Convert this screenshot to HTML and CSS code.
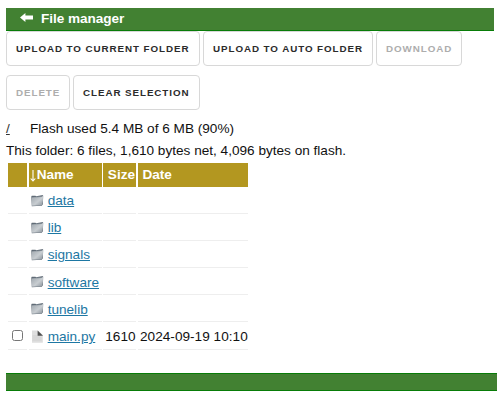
FILE: index.html
```
<!DOCTYPE html>
<html lang="en">
<head>
<meta charset="utf-8">
<title>File manager</title>
<link rel="stylesheet" href="styles.css">
</head>
<body>
<svg class="defs" width="0" height="0" aria-hidden="true">
  <defs>
    <linearGradient id="metal" x1="0" y1="0" x2="1" y2="1">
      <stop offset="0" stop-color="#9da5ac"/><stop offset=".55" stop-color="#c8cdd1"/><stop offset="1" stop-color="#858e97"/>
    </linearGradient>
    <symbol id="folder" viewBox="0 0 13 12">
      <path d="M.3 2 .8 1.2h3.6l.9.6L12 .5v9L10.8 11.3.8 11.7z" fill="#606b76"/>
      <path d="M1 3.4 10.6 2.5 12.6 1 11.5 9.8 10.5 11 1 11.3z" fill="url(#metal)"/>
      <path d="M1 3.2 10.4 2.4 12.3 1" fill="none" stroke="#dfe2e5" stroke-width=".4"/>
    </symbol>
    <symbol id="file" viewBox="0 0 13 13">
      <path d="M1 .5h6l4.8 4.6v7.6H1z" fill="#dedede"/>
      <path d="M1.5 6h7M1.5 8h9M1.5 10h9" stroke="#cacaca" stroke-width=".7"/>
      <path d="M6.6.4 12 5.8H6.6z" fill="#505050"/>
    </symbol>
  </defs>
</svg>
<header class="bar">
  <svg class="back" viewBox="0 0 13 9" preserveAspectRatio="none"><path d="M0 4.5 5.4 0v2.6H13v3.8H5.4V9z" fill="#fff"/></svg>
  <h1>File manager</h1>
</header>
<div class="actions">
  <button class="b-current">Upload to current folder</button>
  <button class="b-auto">Upload to auto folder</button>
  <button class="b-download" disabled>Download</button>
  <button class="b-delete" disabled>Delete</button>
  <button class="b-clear">Clear selection</button>
</div>
<p class="path"><a href="#">/</a><span>Flash used 5.4 MB of 6 MB (90%)</span></p>
<p class="summary">This folder: 6 files, 1,610 bytes net, 4,096 bytes on flash.</p>
<div class="files">
  <div class="row head">
    <div></div>
    <div class="sort"><svg viewBox="0 0 6 12"><path d="M3 0v11M.7 8.5 3 11l2.3-2.5" fill="none" stroke="#fff" stroke-width="1.1"/></svg>Name</div>
    <div>Size</div><div>Date</div>
  </div>
  <div class="row"><div></div><div class="name"><svg><use href="#folder"/></svg><a href="#">data</a></div><div></div><div></div></div>
  <div class="row"><div></div><div class="name"><svg><use href="#folder"/></svg><a href="#">lib</a></div><div></div><div></div></div>
  <div class="row"><div></div><div class="name"><svg><use href="#folder"/></svg><a href="#">signals</a></div><div></div><div></div></div>
  <div class="row"><div></div><div class="name"><svg><use href="#folder"/></svg><a href="#">software</a></div><div></div><div></div></div>
  <div class="row"><div></div><div class="name"><svg><use href="#folder"/></svg><a href="#">tunelib</a></div><div></div><div></div></div>
  <div class="row"><div class="check"><span class="box" role="checkbox" aria-checked="false"></span></div><div class="name"><svg><use href="#file"/></svg><a href="#">main.py</a></div><div class="size">1610</div><div class="date">2024-09-19 10:10</div></div>
</div>
<footer></footer>
</body>
</html>
```
FILE: styles.css
```
* { box-sizing: border-box; }
html { overflow: hidden; background: #fff; }
body {
  margin: 0;
  padding: 8px 0 0 6px;
  font: 13.6px/22px "Liberation Sans", Arial, sans-serif;
  color: #111;
  white-space: nowrap;
}
.defs { display: block; }
.bar {
  display: flex;
  align-items: center;
  gap: 8px;
  width: 488px;
  height: 23px;
  padding: 0 0 1px 14px;
  background: #428132;
  border-bottom: 1px solid #087c08;
}
.back { width: 13px; height: 9px; margin-top: -2px; }
h1 { margin: 0; font-size: 13.6px; line-height: 20px; color: #fff; letter-spacing: -.05px; }
.actions { display: flex; flex-wrap: wrap; gap: 9px 3px; width: 480px; }
button {
  height: 35px;
  padding: 0 0 0 9px;
  background: #fff;
  border: 1px solid #d8d8d8;
  border-radius: 4px;
  font: bold 9.8px/33px "Liberation Sans", Arial, sans-serif;
  letter-spacing: .93px;
  text-align: left;
  text-transform: uppercase;
  white-space: nowrap;
  color: #2b2b2b;
}
button:disabled { color: #adadad; }
.b-current { width: 194px; }
.b-auto { width: 170px; }
.b-download { width: 86px; }
.b-delete { width: 64px; }
.b-clear { width: 127px; }
p { margin: 0; }
.path { display: flex; margin-top: 8px; }
.path a { width: 24px; color: #333; }
.summary { height: 22px; letter-spacing: 0; }
.files { margin: 1px 0 0 2px; width: 240px; }
.row {
  display: grid;
  grid-template-columns: 19px 73px 33px 110px;
  column-gap: 1.67px;
  height: 27.2px;
  line-height: 22px;
}
.row > div { display: flex; align-items: center; padding-top: 3px; border-bottom: 1px solid #eee; }
.row.head { height: 23.5px; font-weight: bold; color: #fff; }
.row.head > div { padding: 0 0 0 4.5px; background: #b39720; border: 0; }
.row.head > .sort { padding-left: 1px; }
.sort svg { width: 6px; height: 12px; margin: 3px 1px 0 0; }
.row > .name { padding-left: 2px; }
.name svg { width: 13px; height: 13px; margin: 0 4px 2px 0; }
.name a { color: #1d77a3; text-underline-offset: 1px; }
.row > .check { padding: 0 0 0 4px; }
.box { width: 11px; height: 11px; margin-top: -1px; border: 1px solid #767676; border-radius: 2.5px; background: #fff; }
.size { padding-left: 2px; }
.date { padding-left: 2px; letter-spacing: .03px; }
footer {
  width: 491px;
  height: 18px;
  margin-top: 23.5px;
  background: #428132;
  border: solid #087c08;
  border-width: 1px 0;
}
```
